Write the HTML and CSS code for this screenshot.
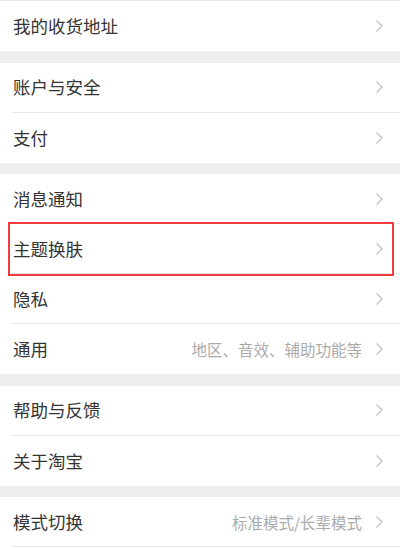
FILE: index.html
```html
<!DOCTYPE html>
<html>
<head>
    <meta charset="utf-8">
    <meta name="viewport" content="width=device-width, initial-scale=1">
    <title>设置</title>
    <link rel="stylesheet" href="styles.css">
</head>
<body>
<article class="settings">
    <section class="group">
        <div class="row"><span class="label">我的收货地址</span><span class="chevron"><svg width="9" height="14" viewBox="0 0 9 14"><path d="M1.5 1.5 L7 7 L1.5 12.5" /></svg></span></div>
    </section>
    <section class="group">
        <div class="row"><span class="label">账户与安全</span><span class="chevron"><svg width="9" height="14" viewBox="0 0 9 14"><path d="M1.5 1.5 L7 7 L1.5 12.5" /></svg></span></div>
        <div class="row"><span class="label">支付</span><span class="chevron"><svg width="9" height="14" viewBox="0 0 9 14"><path d="M1.5 1.5 L7 7 L1.5 12.5" /></svg></span></div>
    </section>
    <section class="group">
        <div class="row"><span class="label">消息通知</span><span class="chevron"><svg width="9" height="14" viewBox="0 0 9 14"><path d="M1.5 1.5 L7 7 L1.5 12.5" /></svg></span></div>
        <div class="row marked"><span class="label">主题换肤</span><span class="chevron"><svg width="9" height="14" viewBox="0 0 9 14"><path d="M1.5 1.5 L7 7 L1.5 12.5" /></svg></span></div>
        <div class="row"><span class="label">隐私</span><span class="chevron"><svg width="9" height="14" viewBox="0 0 9 14"><path d="M1.5 1.5 L7 7 L1.5 12.5" /></svg></span></div>
        <div class="row"><span class="label">通用</span><span class="hint">地区、音效、辅助功能等</span><span class="chevron"><svg width="9" height="14" viewBox="0 0 9 14"><path d="M1.5 1.5 L7 7 L1.5 12.5" /></svg></span></div>
    </section>
    <section class="group">
        <div class="row"><span class="label">帮助与反馈</span><span class="chevron"><svg width="9" height="14" viewBox="0 0 9 14"><path d="M1.5 1.5 L7 7 L1.5 12.5" /></svg></span></div>
        <div class="row"><span class="label">关于淘宝</span><span class="chevron"><svg width="9" height="14" viewBox="0 0 9 14"><path d="M1.5 1.5 L7 7 L1.5 12.5" /></svg></span></div>
    </section>
    <section class="group">
        <div class="row last"><span class="label">模式切换</span><span class="hint">标准模式/长辈模式</span><span class="chevron"><svg width="9" height="14" viewBox="0 0 9 14"><path d="M1.5 1.5 L7 7 L1.5 12.5" /></svg></span></div>
    </section>
</article>
</body>
</html>
```

FILE: styles.css
```css
:root {
    --text-color: #333333;
    --hint-color: #ababab;
    --chevron-color: #c6c6c6;
    --divider-color: #e9e9e9;
    --band-color: #eeeeee;
    --mark-color: #f53b3b;
}

html, body {
    margin: 0;
    padding: 0;
    background-color: #ffffff;
}

body {
    font-family: "Noto Sans CJK SC", "Noto Sans", sans-serif;
    color: var(--text-color);
}

.settings {
    display: flex;
    flex-direction: column;
    gap: 11.5px;
    background-color: var(--band-color);
    border-top: 1px solid var(--divider-color);
}

.group {
    display: flex;
    flex-direction: column;
    background-color: #ffffff;
}

.row {
    position: relative;
    display: flex;
    align-items: center;
    height: 50px;
    margin-left: 12px;
    padding-left: 1px;
    padding-right: 16px;
    box-sizing: border-box;
    border-bottom: 1px solid var(--divider-color);
}

.group .row:last-child {
    border-bottom: none;
}

.group .row.last {
    border-bottom: 1px solid var(--divider-color);
}

.label {
    flex: 1;
    font-size: 17.5px;
    line-height: 1;
}

.hint {
    font-size: 15.5px;
    color: var(--hint-color);
    margin-right: 13px;
}

.chevron {
    display: flex;
    align-items: center;
}

.chevron svg path {
    fill: none;
    stroke: var(--chevron-color);
    stroke-width: 1.4;
}

.marked::after {
    content: "";
    position: absolute;
    top: -2px;
    bottom: -3px;
    left: -4px;
    right: 6px;
    border: 2px solid var(--mark-color);
    pointer-events: none;
}
```
